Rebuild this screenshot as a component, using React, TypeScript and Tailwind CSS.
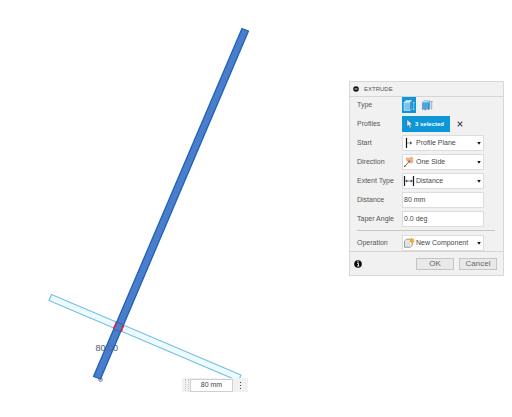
import { useState, type ReactNode } from "react";

const box = "h-4 w-[82px] border border-[#dcdcdc] bg-white text-[7px] leading-[14px] text-[#484848] outline-none";
const field = `${box} block resize-none overflow-hidden whitespace-nowrap pl-px leading-[13px]`;

function Row({ label, htmlFor, children }: { label: string; htmlFor: string; children: ReactNode }) {
  return (
    <div className="flex items-center">
      <label htmlFor={htmlFor} className="w-[45px] shrink-0 whitespace-nowrap text-[#555]">
        {label}
      </label>
      {children}
    </div>
  );
}

function SelectRow({ id, label, options, icon }: { id: string; label: string; options: string[]; icon: ReactNode }) {
  return (
    <Row label={label} htmlFor={id}>
      <div className="relative">
        <select id={id} className={`${box} block appearance-none pl-[13px] pr-3`}>
          {options.map((o) => (
            <option key={o}>{o}</option>
          ))}
        </select>
        <span className="pointer-events-none absolute inset-y-0 left-px flex items-center">{icon}</span>
        <svg className="pointer-events-none absolute right-[3px] top-[7px]" width="4" height="3" viewBox="0 0 4 3">
          <path d="M.2 0h3.600L2 2.700z" fill="#111" />
        </svg>
      </div>
    </Row>
  );
}

const StartIcon = () => (
  <svg width="12" height="12" viewBox="0 0 12 12" fill="none">
    <path d="M3.500 1v10" stroke="#111" strokeWidth="1.200" />
    <path d="M4 6h4" stroke="#888" strokeWidth=".8" />
    <path d="M7 4.200L9.300 6 7 7.800z" fill="#555" />
  </svg>
);

const DirectionIcon = () => (
  <svg width="12" height="12" viewBox="0 0 12 12" fill="none">
    <path d="M3 1.800l2.500.400L9.500 1l.5 5.500-3 .8L4 5z" fill="#f3ae82" stroke="#e89a68" strokeWidth=".5" />
    <path d="M1.500 10.500L6.500 5.200" stroke="#555" strokeWidth=".9" />
    <path d="M7.400 4.200L6.800 6.600 5 5z" fill="#666" />
    <circle cx="1.700" cy="10.300" r=".8" fill="#555" />
  </svg>
);

const ExtentIcon = () => (
  <svg width="12" height="12" viewBox="0 0 12 12" fill="none">
    <path d="M1.500 1v10M10.500 1v10" stroke="#111827" strokeWidth="1.200" />
    <path d="M3 6h6" stroke="#555" strokeWidth=".8" />
    <path d="M2 6l2.200-1.600v3.200zM10 6L7.800 4.400v3.200z" fill="#444" />
  </svg>
);

const ComponentIcon = () => (
  <svg width="12" height="12" viewBox="0 0 12 12" fill="none">
    <path d="M1.500 4l2-1.800h6.200v5.400L7.500 10.300h-6z" fill="#e2e2e2" stroke="#888" strokeWidth=".8" />
    <path d="M1.800 4.200h5.600v5.800" stroke="#f8f8f8" strokeWidth=".6" />
    <path d="M8.500 0l.8 2 2.100-.5-1 1.800 1.400 1.400-2.100.2-.7 2-1-1.900-2 .1 1.300-1.600L6.200 1.700l1.900.3z" fill="#f5a623" />
  </svg>
);

const SolidIcon = () => (
  <svg width="12" height="13" viewBox="0 0 12 13">
    <path d="M1 3.500L3 1.500h6L7 3.500z" fill="#d6effc" />
    <path d="M1 3.500h6v8H1z" fill="#7cc3ef" />
    <path d="M7 3.500l2-2v8l-2 2z" fill="#3b93d2" />
    <path d="M1 11.500v-8h6M1 3.500L3 1.500h6" fill="none" stroke="#e6f5fc" strokeWidth=".5" />
    <path d="M1 11.500h6l2-2" fill="none" stroke="#c5e6f8" strokeWidth=".7" />
    <path d="M10.700 3v8M9.900 4l.8-1 .8 1M9.900 10l.8 1 .8-1" fill="none" stroke="#c4e5f5" strokeWidth=".6" />
  </svg>
);

const ThinIcon = () => (
  <svg width="12" height="13" viewBox="0 0 12 13">
    <path d="M1 3.500L3 1.500h6.200v7.500L7.500 11 6 9.500l-2 1.700-1.300-1.400L1 11z" fill="#4fa5de" />
    <path d="M1 3.500L3 1.500h6.200L7.500 3.500z" fill="#a9d6f1" />
    <path d="M1 11l1.700-1.200L4 11.200l2-1.700L7.500 11l1.700-2" fill="none" stroke="#6c8090" strokeWidth=".7" />
    <path d="M7.500 3.500V11" stroke="#2f7fb8" strokeWidth=".5" />
    <path d="M10.700 2v8.500M9.900 3l.8-1 .8 1" fill="none" stroke="#888" strokeWidth=".7" />
  </svg>
);

function Drawing() {
  return (
    <svg className="absolute left-0 top-0" width="260" height="400" viewBox="0 0 260 400" role="img" aria-label="Sketch">
      <path d="M51.500 294.500L241 375l-2.500 6L49 300.500z" fill="#effafe" stroke="#70c2e6" strokeWidth="1.200" />
      <circle cx="100.500" cy="379.500" r="2" fill="#c5c5d8" stroke="#8888a0" strokeWidth=".8" />
      <text x="95.500" y="351" fontSize="9" fill="#777" fontFamily="'Liberation Sans', Arial, sans-serif">80.00</text>
      <path d="M242 28.500L248.500 31 100.500 379 93.500 376.500z" fill="#4a7dca" stroke="#1c62ba" strokeWidth="1.300" strokeLinejoin="round" />
      <path d="M116.500 322l7.500 3M113.500 329l7.500 3" stroke="#285fae" strokeWidth=".8" />
      <path d="M116.500 322l-3 7M123.500 325.500l-2.500 6.500" stroke="#ff1520" strokeWidth="1.600" strokeDasharray="3 .6" />
      <text x="95.500" y="351" fontSize="9" fill="#304f82" fillOpacity=".35" fontFamily="'Liberation Sans', Arial, sans-serif">80.00</text>
    </svg>
  );
}

export default function App() {
  const [distance, setDistance] = useState("80 mm");
  const [taper, setTaper] = useState("0.0 deg");

  return (
    <main className="relative flex min-h-screen items-start justify-end bg-white pr-2 pt-[81px] font-['Liberation_Sans',Arial,sans-serif] text-[7px] leading-[14px]">
      <Drawing />

      <div className="absolute left-[182px] top-[378px] flex h-3.5 w-[66px] items-center bg-[#f1f1f1]">
        <span className="ml-[3px] h-3 w-1 border-x border-dotted border-[#c4c4c4]" />
        <input
          aria-label="Distance on canvas"
          value={distance}
          onChange={(e) => setDistance(e.target.value)}
          className="ml-px h-[13px] w-[43px] border border-[#cfcfcf] bg-white text-center text-[7px] text-[#444] outline-none"
        />
        <button aria-label="More options" className="flex h-full flex-1 flex-col items-center justify-center gap-[2px]">
          <span className="size-px bg-[#444]" />
          <span className="size-px bg-[#444]" />
          <span className="size-px bg-[#444]" />
        </button>
      </div>

      <section aria-label="Extrude" className="relative w-[155px] border border-[#d8d8d8] bg-[#f1f1f1]">
        <header className="flex h-[15px] items-center gap-[5px] border-b border-[#d5d5d5] pl-[3px]">
          <svg width="6" height="6" viewBox="0 0 6 6">
            <circle cx="3" cy="3" r="2.800" fill="#111" />
            <path d="M1.500 3h3" stroke="#eee" strokeWidth=".9" />
          </svg>
          <h1 className="text-[6px] text-[#555]">EXTRUDE</h1>
        </header>

        <form className="pl-[7px] pr-2" onSubmit={(e) => e.preventDefault()}>
          <div className="flex flex-col gap-[3px]">
            <Row label="Type" htmlFor="type">
              <button id="type" type="button" aria-label="Solid extrude" className="flex h-4 w-[14px] items-center justify-center bg-[#0d96d8]">
                <SolidIcon />
              </button>
              <button type="button" aria-label="Thin extrude" className="ml-1 flex h-4 w-[14px] items-center justify-center">
                <ThinIcon />
              </button>
            </Row>
            <Row label="Profiles" htmlFor="profiles">
              <button id="profiles" type="button" className="flex h-4 w-12 items-center gap-[2px] whitespace-nowrap bg-[#0d96d8] pl-1 text-[6px] font-bold text-white">
                <svg width="7" height="10" viewBox="0 0 7 10">
                  <path d="M1 .5v7l1.700-1.500L4 9l1.300-.6L4.100 5.700H6.500z" fill="#e9f3f8" stroke="#477387" strokeWidth=".5" />
                </svg>
                3 selected
              </button>
              <button type="button" aria-label="Clear profiles" className="ml-[7px]">
                <svg width="6" height="6" viewBox="0 0 6 6">
                  <path d="M.7.7l4.600 4.600M5.300.7L.7 5.300" stroke="#444" strokeWidth="1.100" />
                </svg>
              </button>
            </Row>
            <SelectRow id="start" label="Start" options={["Profile Plane", "Offset Plane", "Object"]} icon={<StartIcon />} />
            <SelectRow id="direction" label="Direction" options={["One Side", "Two Sides", "Symmetric"]} icon={<DirectionIcon />} />
            <SelectRow id="extent" label="Extent Type" options={["Distance", "To Object", "All"]} icon={<ExtentIcon />} />
            <Row label="Distance" htmlFor="distance">
              <textarea id="distance" rows={1} className={field} value={distance} onChange={(e) => setDistance(e.target.value)} />
            </Row>
            <Row label="Taper Angle" htmlFor="taper">
              <textarea id="taper" rows={1} className={field} value={taper} onChange={(e) => setTaper(e.target.value)} />
            </Row>
          </div>
          <hr className="mb-1 mt-[3px] border-[#c6c6c6]" />
          <SelectRow id="operation" label="Operation" options={["New Component", "New Body", "Join", "Cut"]} icon={<ComponentIcon />} />
        </form>

        <footer className="flex h-6 items-center border-t border-[#d5d5d5] pl-1 pr-[6px]">
          <button aria-label="Information" className="mr-auto">
            <svg width="8" height="8" viewBox="0 0 8 8">
              <circle cx="4" cy="4" r="3.800" fill="#080808" />
              <path d="M3 3.300h1.500V6M3 6h2.300" stroke="#fff" strokeWidth=".9" fill="none" />
              <circle cx="4" cy="1.800" r=".7" fill="#fff" />
            </svg>
          </button>
          <button className="h-3 w-[38px] border border-[#c4c4c4] bg-[#e9e9e9] text-[8px] leading-[10px] text-[#666]">OK</button>
          <button className="ml-[5px] h-3 w-[38px] border border-[#c4c4c4] bg-[#e9e9e9] text-[8px] leading-[10px] text-[#666]">Cancel</button>
        </footer>
      </section>
    </main>
  );
}
